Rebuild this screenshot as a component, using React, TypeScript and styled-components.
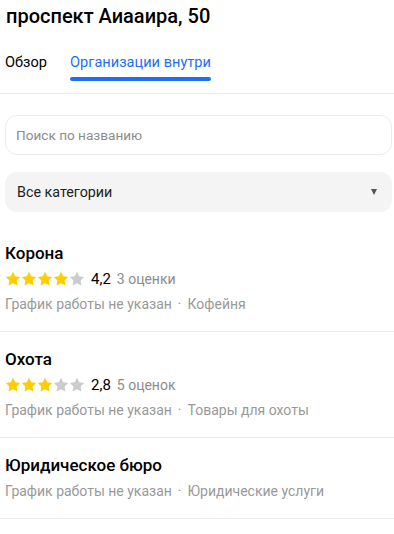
import styled, { createGlobalStyle } from 'styled-components';

const GlobalStyle = createGlobalStyle`
	html, body {
		margin: 0;
		padding: 0;
		background: #fff;
	}
	body {
		font-family: Roboto, "Noto Sans", sans-serif;
		color: #000;
	}
`;

interface Org {
	name: string;
	rating?: number;
	votes?: string;
	hours: string;
	category: string;
}

const orgs: Org[] = [
	{ name: 'Корона', rating: 4.2, votes: '3 оценки', hours: 'График работы не указан', category: 'Кофейня' },
	{ name: 'Охота', rating: 2.8, votes: '5 оценок', hours: 'График работы не указан', category: 'Товары для охоты' },
	{ name: 'Юридическое бюро', hours: 'График работы не указан', category: 'Юридические услуги' },
];

const Star = ({ filled }: { filled: boolean }) => (
	<StarSvg viewBox="0 0 24 24" $filled={filled}>
		<path d="M12 1.2l3.3 6.8 7.5 1.1-5.4 5.3 1.3 7.5L12 18.4l-6.7 3.5 1.3-7.5-5.4-5.3 7.5-1.1z" />
	</StarSvg>
);

const Stars = ({ value }: { value: number }) => {
	const full = Math.round(value);
	return (
		<StarsRow>
			{[0, 1, 2, 3, 4].map((i) => (
				<Star key={i} filled={i < full} />
			))}
		</StarsRow>
	);
};

const App = () => {
	return (
		<Page>
			<GlobalStyle />
			<Header>
				<Title>проспект Аиааира, 50</Title>
				<Tabs>
					<Tab>Обзор</Tab>
					<Tab $active>Организации внутри</Tab>
				</Tabs>
			</Header>
			<Filters>
				<SearchInput placeholder="Поиск по названию" />
				<Select>
					<span>Все категории</span>
					<Arrow />
				</Select>
			</Filters>
			<List>
				{orgs.map((org) => (
					<Item key={org.name}>
						<OrgName>{org.name}</OrgName>
						{org.rating !== undefined && (
							<RatingRow>
								<Stars value={org.rating} />
								<RatingValue>{org.rating.toFixed(1).replace('.', ',')}</RatingValue>
								<Votes>{org.votes}</Votes>
							</RatingRow>
						)}
						<Meta>
							{org.hours}
							<Dot>·</Dot>
							{org.category}
						</Meta>
					</Item>
				))}
			</List>
		</Page>
	);
};

export default App;

const Page = styled.div`
	width: 394px;
	min-height: 534px;
	background: #fff;
`;

const Header = styled.div`
	display: flex;
	flex-direction: column;
	border-bottom: 1px solid #ebebeb;
	padding: 4px 5px 0;
`;

const Title = styled.h1`
	margin: 0 0 0 1px;
	font-size: 20px;
	line-height: 24px;
	font-weight: 500;
	color: #000;
`;

const Tabs = styled.div`
	display: flex;
	gap: 23px;
	margin-top: 24px;
`;

const Tab = styled.div<{ $active?: boolean }>`
	position: relative;
	font-size: 14.6px;
	line-height: 20px;
	padding-bottom: 21px;
	color: ${({ $active }) => ($active ? '#1e6ef5' : '#000')};

	&::after {
		content: '';
		display: ${({ $active }) => ($active ? 'block' : 'none')};
		position: absolute;
		left: 0;
		right: 0;
		top: 25px;
		height: 4px;
		border-radius: 2px;
		background: #1e6ef5;
	}
`;

const Filters = styled.div`
	display: flex;
	flex-direction: column;
	gap: 17px;
	padding: 21px 2px 0 5px;
`;

const SearchInput = styled.input`
	box-sizing: border-box;
	height: 40px;
	width: 100%;
	border: 1px solid #ebebeb;
	border-radius: 12px;
	padding: 0 10px;
	font-family: inherit;
	font-size: 13.6px;
	color: #000;
	outline: none;

	&::placeholder {
		color: #8c8c8c;
	}
`;

const Select = styled.div`
	box-sizing: border-box;
	height: 40px;
	display: flex;
	align-items: center;
	justify-content: space-between;
	padding: 0 15px 0 12px;
	background: #f4f4f4;
	border-radius: 12px;
	font-size: 14.3px;
	color: #222;
`;

const Arrow = styled.span`
	width: 0;
	height: 0;
	border-left: 3.5px solid transparent;
	border-right: 3.5px solid transparent;
	border-top: 6px solid #555;
`;

const List = styled.div`
	display: flex;
	flex-direction: column;
	padding-top: 14px;
`;

const Item = styled.div`
	display: flex;
	flex-direction: column;
	gap: 5px;
	padding: 16px 5px 17px;
	border-bottom: 1px solid #ebebeb;
`;

const OrgName = styled.div`
	font-size: 17px;
	line-height: 22px;
	font-weight: 500;
	color: #000;
`;

const RatingRow = styled.div`
	display: flex;
	align-items: center;
	height: 20px;
	font-size: 14px;
`;

const StarsRow = styled.div`
	display: flex;
	margin-right: 6px;
`;

const StarSvg = styled.svg<{ $filled: boolean }>`
	width: 16px;
	height: 16px;
	fill: ${({ $filled }) => ($filled ? '#fc0' : '#ccc')};
`;

const RatingValue = styled.span`
	font-size: 15px;
	color: #000;
	margin-right: 6px;
`;

const Votes = styled.span`
	color: #8c8c8c;
`;

const Meta = styled.div`
	font-size: 14px;
	line-height: 20px;
	color: #999;
`;

const Dot = styled.span`
	margin: 0 6px;
`;
